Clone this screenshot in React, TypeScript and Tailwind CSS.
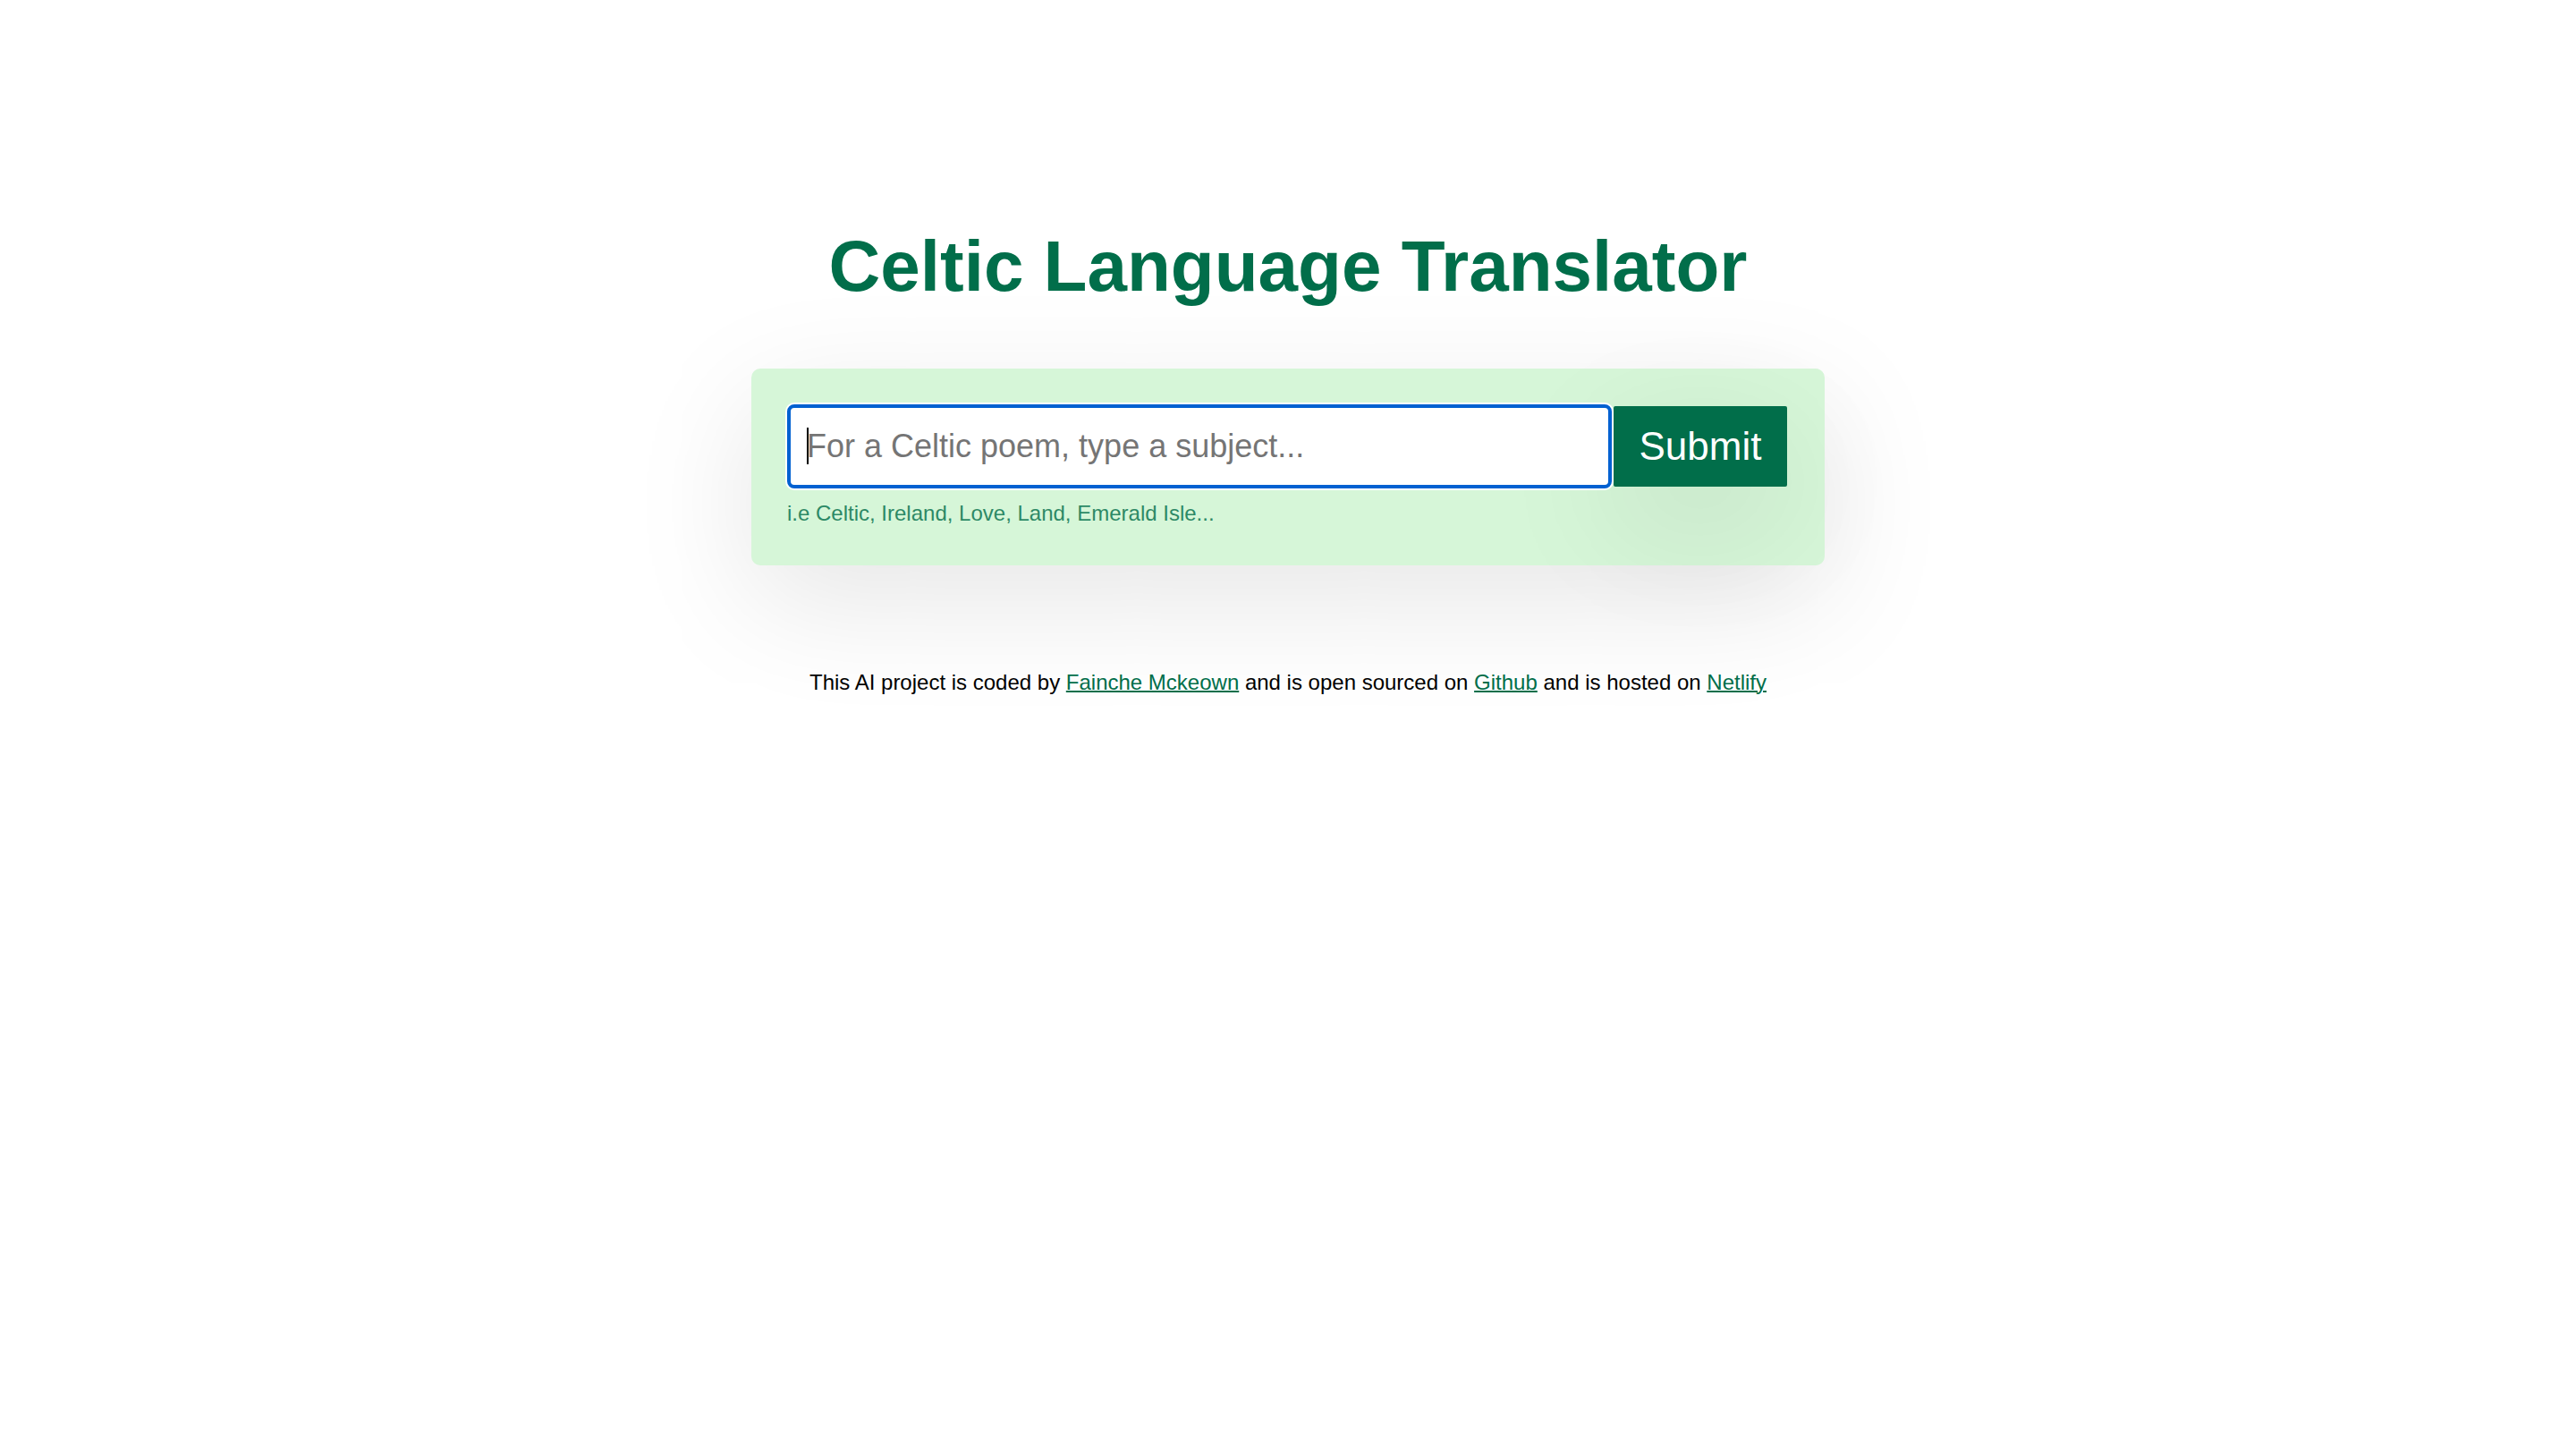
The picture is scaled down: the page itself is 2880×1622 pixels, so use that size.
const linkClass = "text-[#016e4a] underline decoration-2";

export default function App() {
  return (
    <main className="flex min-h-screen flex-col items-center bg-white px-10 pt-[252px] font-['Liberation_Sans',Arial,sans-serif]">
      <h1 className="text-center text-[80px] leading-[92px] font-bold text-[#016e4a]">
        Celtic Language Translator
      </h1>

      <form
        className="mt-[68px] w-full max-w-[1200px] rounded-[10px] bg-[#d6f6d8] pt-10 pr-[42px] pb-[42px] pl-10 shadow-[0_40px_140px_rgba(0,0,0,0.1)]"
        onSubmit={(event) => event.preventDefault()}
      >
        <div className="flex items-center gap-[2px]">
          <div className="relative min-w-0 flex-1">
            <input
              type="text"
              aria-label="Poem subject"
              aria-describedby="subject-hint"
              placeholder="For a Celtic poem, type a subject..."
              className="block h-[94px] w-full rounded-[8px] border-4 border-[#0161d1] bg-white px-[18px] text-[36px] text-black caret-transparent ring-2 ring-white outline-none placeholder:text-[#757575] placeholder:opacity-100"
            />
            <span aria-hidden="true" className="absolute top-[26px] left-[22px] h-[41px] w-[2px] bg-black" />
          </div>
          <button
            type="submit"
            className="h-[90px] w-[194px] rounded-[2px] bg-[#016e4a] text-[44px] text-white shadow-[0_40px_140px_rgba(0,0,0,0.1)]"
          >
            Submit
          </button>
        </div>
        <p id="subject-hint" className="mt-3 text-[24px] leading-[32px] text-[#016e4a] opacity-80">
          i.e Celtic, Ireland, Love, Land, Emerald Isle...
        </p>
      </form>

      <footer className="mt-[117px] text-center text-[24px] leading-[28px] text-black">
        This AI project is coded by{" "}
        <a className={linkClass} href="#author">Fainche Mckeown</a> and is open sourced on{" "}
        <a className={linkClass} href="#github">Github</a> and is hosted on{" "}
        <a className={linkClass} href="#netlify">Netlify</a>
      </footer>
    </main>
  );
}
